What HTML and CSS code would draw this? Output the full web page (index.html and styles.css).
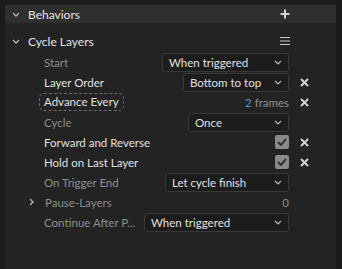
FILE: index.html
```html
<!DOCTYPE html>
<html>
<head>
<meta charset="utf-8">
<link rel="stylesheet" href="styles.css">
</head>
<body>
<div class="frame">
  <div class="panel">
    <div class="header">
      <svg class="chev" width="8" height="5" viewBox="0 0 8 5"><polyline points="1,1 4,4 7,1" fill="none" stroke="#b8b8b8" stroke-width="1.3"/></svg>
      <span class="title">Behaviors</span>
      <svg class="plus" width="10" height="10" viewBox="0 0 10 10"><path d="M5 0.5V9.5M0.5 5H9.5" stroke="#d4d4d4" stroke-width="2"/></svg>
    </div>
    <div class="body">
      <div class="group">
        <svg class="chev" width="8" height="5" viewBox="0 0 8 5"><polyline points="1,1 4,4 7,1" fill="none" stroke="#b8b8b8" stroke-width="1.3"/></svg>
        <span class="title">Cycle Layers</span>
        <svg class="menu" width="10" height="8" viewBox="0 0 10 8"><path d="M0 0.5H10M0 4H10M0 7.5H10" stroke="#c8c8c8" stroke-width="1"/></svg>
      </div>

      <div class="row">
        <span class="label dim">Start</span>
        <div class="select w-start"><span>When triggered</span><svg width="8" height="5" viewBox="0 0 8 5"><polyline points="1,1 4,4 7,1" fill="none" stroke="#b8b8b8" stroke-width="1.2"/></svg></div>
        <span class="act"></span>
      </div>
      <div class="row">
        <span class="label">Layer Order</span>
        <div class="select w-order"><span>Bottom to top</span><svg width="8" height="5" viewBox="0 0 8 5"><polyline points="1,1 4,4 7,1" fill="none" stroke="#b8b8b8" stroke-width="1.2"/></svg></div>
        <span class="act"><svg width="9" height="9" viewBox="0 0 9 9"><path d="M1 1L8 8M8 1L1 8" stroke="#d4d4d4" stroke-width="2"/></svg></span>
      </div>
      <div class="row">
        <span class="label focus">Advance Every</span>
        <span class="value"><span class="num">2</span> frames</span>
        <span class="act"><svg width="9" height="9" viewBox="0 0 9 9"><path d="M1 1L8 8M8 1L1 8" stroke="#d4d4d4" stroke-width="2"/></svg></span>
      </div>
      <div class="row">
        <span class="label dim">Cycle</span>
        <div class="select w-cycle"><span>Once</span><svg width="8" height="5" viewBox="0 0 8 5"><polyline points="1,1 4,4 7,1" fill="none" stroke="#b8b8b8" stroke-width="1.2"/></svg></div>
        <span class="act"></span>
      </div>
      <div class="row">
        <span class="label">Forward and Reverse</span>
        <span class="check"><svg width="10" height="8" viewBox="0 0 10 8"><polyline points="1,4 4,7 9,1" fill="none" stroke="#333" stroke-width="2"/></svg></span>
        <span class="act"><svg width="9" height="9" viewBox="0 0 9 9"><path d="M1 1L8 8M8 1L1 8" stroke="#d4d4d4" stroke-width="2"/></svg></span>
      </div>
      <div class="row">
        <span class="label">Hold on Last Layer</span>
        <span class="check"><svg width="10" height="8" viewBox="0 0 10 8"><polyline points="1,4 4,7 9,1" fill="none" stroke="#333" stroke-width="2"/></svg></span>
        <span class="act"><svg width="9" height="9" viewBox="0 0 9 9"><path d="M1 1L8 8M8 1L1 8" stroke="#d4d4d4" stroke-width="2"/></svg></span>
      </div>
      <div class="row">
        <span class="label dim">On Trigger End</span>
        <div class="select w-trigger"><span>Let cycle finish</span><svg width="8" height="5" viewBox="0 0 8 5"><polyline points="1,1 4,4 7,1" fill="none" stroke="#b8b8b8" stroke-width="1.2"/></svg></div>
        <span class="act"></span>
      </div>
      <div class="row sub">
        <svg class="rchev" width="5" height="8" viewBox="0 0 5 8"><polyline points="1,1 4,4 1,7" fill="none" stroke="#b8b8b8" stroke-width="1.3"/></svg>
        <span class="label dim">Pause-Layers</span>
        <span class="value dimv">0</span>
        <span class="act"></span>
      </div>
      <div class="row">
        <span class="label dim">Continue After P...</span>
        <div class="select w-cont"><span>When triggered</span><svg width="8" height="5" viewBox="0 0 8 5"><polyline points="1,1 4,4 7,1" fill="none" stroke="#b8b8b8" stroke-width="1.2"/></svg></div>
        <span class="act"></span>
      </div>
    </div>
  </div>
</div>
</body>
</html>
```
FILE: styles.css
```css
* { box-sizing: border-box; }
html, body {
  margin: 0;
  padding: 0;
  background: #1b1b1b;
  width: 342px;
  height: 269px;
  overflow: hidden;
  font-family: "Lato", "Noto Sans", sans-serif;
  font-size: 11.5px;
}
.frame {
  padding: 5px 6px 0 5px;
  height: 269px;
}
.panel {
  background: #232323;
  height: 100%;
}
.header {
  height: 18px;
  background: #2f2f2f;
  display: flex;
  align-items: center;
  padding-left: 7px;
  padding-right: 46px;
}
.title {
  color: #e4e4e4;
  margin-left: 8px;
  font-size: 12px;
}
.plus, .menu { margin-left: auto; }
.body { padding-top: 7px; }
.group {
  height: 22px;
  display: flex;
  align-items: center;
  padding-left: 7px;
  padding-right: 46px;
}
.row {
  height: 20px;
  display: flex;
  align-items: center;
  padding-left: 39px;
  padding-right: 17px;
}
.row.sub { padding-left: 24px; }
.rchev { margin-right: 11px; }
.label {
  color: #e0e0e0;
  white-space: nowrap;
}
.label.dim { color: #8e8e8e; }
.label.focus {
  border: 1px dashed #6a6a6a;
  border-radius: 5px;
  padding: 0 4px;
  margin-left: -5px;
  height: 18px;
  line-height: 16px;
}
.select {
  margin-left: auto;
  height: 19px;
  background: #1c1c1c;
  border: 1px solid #383838;
  border-radius: 3px;
  display: flex;
  align-items: center;
  justify-content: space-between;
  padding: 0 6px 0 6px;
  color: #e0e0e0;
}
.w-start { width: 127px; }
.w-order { width: 106px; }
.w-cycle { width: 101px; }
.w-trigger { width: 124px; }
.w-cont { width: 145px; }
.value {
  margin-left: auto;
  color: #8e8e8e;
}
.num { color: #4f93dc; }
.check {
  margin-left: auto;
  width: 14px;
  height: 14px;
  background: #8a8a8a;
  border-radius: 2px;
  display: flex;
  align-items: center;
  justify-content: center;
}
.act {
  width: 30px;
  display: flex;
  justify-content: center;
  align-items: center;
}
```
